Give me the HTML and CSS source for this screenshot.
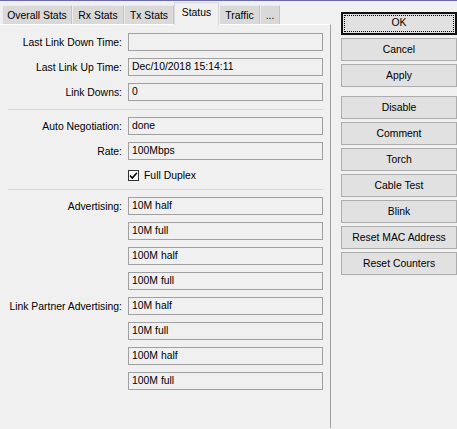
FILE: index.html
```html
<!DOCTYPE html>
<html>
<head>
<meta charset="utf-8">
<link rel="stylesheet" href="styles.css">
</head>
<body>
<div class="window">
  <div class="left">
    <div class="tabs">
      <div class="tab t1">Overall Stats</div>
      <div class="tab t2">Rx Stats</div>
      <div class="tab t3">Tx Stats</div>
      <div class="tab active t4">Status</div>
      <div class="tab t5">Traffic</div>
      <div class="tab t6">...</div>
    </div>
    <div class="panel">
      <div class="row"><span class="label">Last Link Down Time:</span><span class="field"></span></div>
      <div class="row"><span class="label">Last Link Up Time:</span><span class="field">Dec/10/2018 15:14:11</span></div>
      <div class="row"><span class="label">Link Downs:</span><span class="field">0</span></div>
      <div class="sep sep1"></div>
      <div class="row"><span class="label">Auto Negotiation:</span><span class="field">done</span></div>
      <div class="row"><span class="label">Rate:</span><span class="field">100Mbps</span></div>
      <div class="row check-row"><span class="label"></span><span class="check"><span class="box"><svg width="9" height="9" viewBox="0 0 9 9"><path d="M1 4.5 L3.3 7 L8 1.8" fill="none" stroke="#000" stroke-width="1.6"/></svg></span>Full Duplex</span></div>
      <div class="sep sep2"></div>
      <div class="row"><span class="label">Advertising:</span><span class="field">10M half</span></div>
      <div class="row"><span class="label"></span><span class="field">10M full</span></div>
      <div class="row"><span class="label"></span><span class="field">100M half</span></div>
      <div class="row"><span class="label"></span><span class="field">100M full</span></div>
      <div class="row"><span class="label">Link Partner Advertising:</span><span class="field">10M half</span></div>
      <div class="row"><span class="label"></span><span class="field">10M full</span></div>
      <div class="row"><span class="label"></span><span class="field">100M half</span></div>
      <div class="row"><span class="label"></span><span class="field">100M full</span></div>
    </div>
  </div>
  <div class="buttons">
    <div class="btn default"><span class="focus">OK</span></div>
    <div class="btn">Cancel</div>
    <div class="btn">Apply</div>
    <div class="btn gap">Disable</div>
    <div class="btn">Comment</div>
    <div class="btn">Torch</div>
    <div class="btn">Cable Test</div>
    <div class="btn">Blink</div>
    <div class="btn">Reset MAC Address</div>
    <div class="btn">Reset Counters</div>
  </div>
</div>
</body>
</html>
```
FILE: styles.css
```css
html, body {
  margin: 0;
  padding: 0;
  height: 100%;
}
body {
  background: #f0f0f0;
  font-family: "Liberation Sans", Arial, sans-serif;
  font-size: 10.4px;
  color: #000;
  overflow: hidden;
}
.window {
  border-top: 1px solid #6a6ab0;
  height: 428px;
  display: flex;
  box-sizing: border-box;
}
.left {
  width: 331px;
  display: flex;
  flex-direction: column;
}
.tabs {
  display: flex;
  height: 23px;
  padding-left: 2px;
  align-items: flex-end;
  position: relative;
  z-index: 1;
}
.tab {
  height: 19px;
  box-sizing: border-box;
  background: #d9d9d9;
  border: 1px solid #ececec;
  border-bottom: none;
  border-right: 1px solid #c4c4c4;
  line-height: 18px;
  text-align: center;
  padding-top: 1px;
}
.tab.active {
  height: 22px;
  background: #f0f0f0;
  border: 1px solid #d9d9d9;
  border-bottom: none;
  margin-bottom: -1px;
  height: 23px;
  line-height: 19px;
  padding-top: 0;
}
.t1 { width: 70px; }
.t2 { width: 52px; }
.t3 { width: 50px; }
.t4 { width: 45px; }
.t5 { width: 41px; }
.t6 { width: 20px; }
.panel {
  flex: 1;
  border-top: 1px solid #ffffff;
  border-right: 1px solid #a0a0a0;
  padding-top: 8px;
  display: flex;
  flex-direction: column;
  gap: 7px;
}
.row {
  display: flex;
  align-items: center;
  height: 18px;
  gap: 6px;
}
.label {
  width: 122px;
  text-align: right;
  flex: none;
}
.field {
  width: 195px;
  height: 18px;
  box-sizing: border-box;
  border: 1px solid #a0a0a0;
  padding-left: 3px;
  line-height: 16px;
  white-space: nowrap;
}
.sep {
  height: 1px;
  background: #d7d7d7;
  margin-left: 8px;
  width: 315px;
}
.sep1 { margin-top: 1px; }
.sep2 { margin-top: 0px; }
.check-row {
  height: 14px;
  margin-top: 1px;
}
.check {
  display: flex;
  align-items: center;
  gap: 5px;
}
.box {
  width: 11px;
  height: 11px;
  box-sizing: border-box;
  border: 1px solid #333;
  background: #fff;
  display: flex;
  align-items: center;
  justify-content: center;
}
.box svg { display: block; }
.buttons {
  margin-left: 10px;
  padding-top: 11px;
  width: 116px;
  display: flex;
  flex-direction: column;
  gap: 3px;
}
.btn {
  height: 23px;
  box-sizing: border-box;
  border: 1px solid #adadad;
  background: #e1e1e1;
  text-align: center;
  line-height: 21px;
}
.btn.gap { margin-top: 6px; }
.btn.default {
  border: 2px solid #111;
  padding: 1px;
  line-height: 17px;
}
.focus {
  display: block;
  height: 17px;
  box-sizing: border-box;
  outline: 1px dotted #000;
  outline-offset: -1px;
  line-height: 16px;
}
```
